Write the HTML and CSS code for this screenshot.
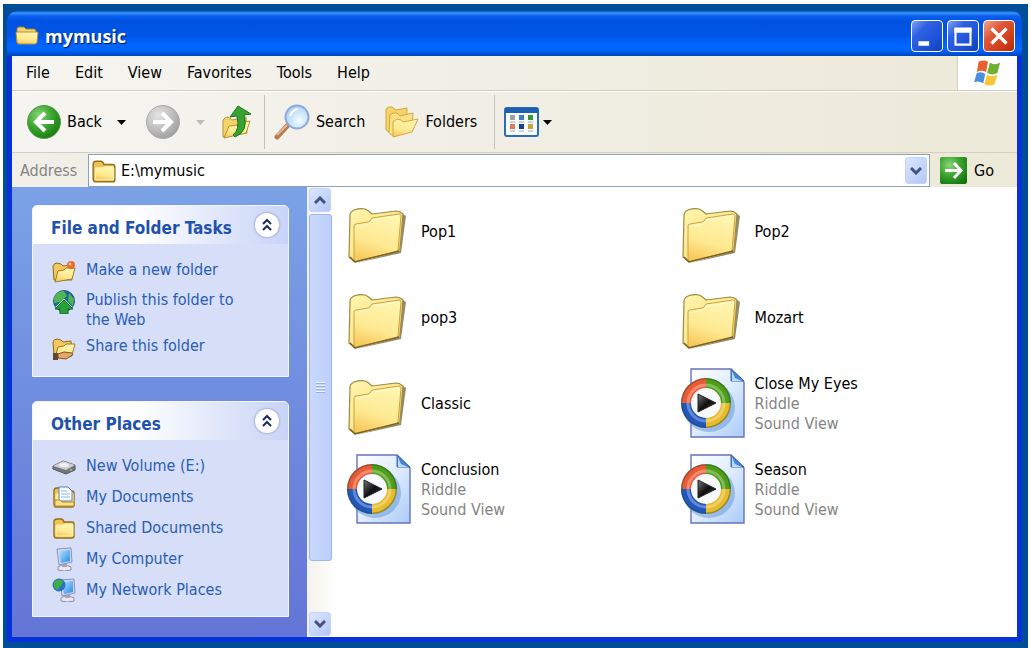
FILE: index.html
```
<!DOCTYPE html>
<html lang="en">
<head>
    <meta charset="UTF-8">
    <meta name="viewport" content="width=device-width, initial-scale=1.0">
    <title>mymusic</title>
    <link rel="stylesheet" href="styles.css">
</head>
<body>
    <!-- Shared icons -->
    <svg class="sprite" aria-hidden="true">
        <defs>
            <linearGradient id="gFolder" x1="0" y1="0" x2="1" y2="1">
                <stop offset="0" stop-color="#fff6b0"/><stop offset=".55" stop-color="#fde588"/><stop offset="1" stop-color="#f3bf4c"/>
            </linearGradient>
            <linearGradient id="gFront" x1="0.6" y1="0" x2="0.3" y2="1">
                <stop offset="0" stop-color="#fff5ae"/><stop offset=".6" stop-color="#fee992"/><stop offset="1" stop-color="#f8c95c"/>
            </linearGradient>
            <linearGradient id="gPage" x1="0" y1="0" x2="1" y2="1">
                <stop offset="0" stop-color="#ffffff"/><stop offset=".5" stop-color="#dfecfd"/><stop offset="1" stop-color="#a9cbf8"/>
            </linearGradient>
            <linearGradient id="gArrow" x1="0" y1="0" x2="1" y2="1">
                <stop offset="0" stop-color="#777"/><stop offset=".5" stop-color="#111"/><stop offset="1" stop-color="#333"/>
            </linearGradient>
            <linearGradient id="gScreen" x1="0" y1="0" x2="1" y2="1">
                <stop offset="0" stop-color="#b5e6ff"/><stop offset="1" stop-color="#2389e6"/>
            </linearGradient>
            <radialGradient id="gGreen" cx=".35" cy=".3" r=".8">
                <stop offset="0" stop-color="#8bd47c"/><stop offset=".5" stop-color="#3aa52d"/><stop offset="1" stop-color="#14750f"/>
            </radialGradient>
            <radialGradient id="gGray" cx=".35" cy=".3" r=".8">
                <stop offset="0" stop-color="#e4e4e2"/><stop offset=".6" stop-color="#bababa"/><stop offset="1" stop-color="#999"/>
            </radialGradient>
            <radialGradient id="gLens" cx=".6" cy=".65" r=".7">
                <stop offset="0" stop-color="#f4fcff"/><stop offset="1" stop-color="#a5d0f6"/>
            </radialGradient>
        </defs>
        <symbol id="folder" viewBox="0 0 68 72">
            <path d="M12 67 L57 57 L62 20 L59 18 L56 55 Z" fill="#6e663f" opacity=".75"/>
            <path d="M6 19 Q6 16 10 14 Q16 12 21 13 Q24 14 28 18 L52 15 Q56 15 59 18 L56 54 L11 66 L5 61 Z" fill="url(#gFolder)" stroke="#9a8a44" stroke-width="1.2" stroke-linejoin="round"/>
            <path d="M10 30 Q10 28 12 28 L24 26 Q26 26 28 22 L55 18 Q57 18 57 20 L54 54 Q54 56 52 56 L12 65 Q10 65 10 63 Z" fill="url(#gFront)" stroke="#c9a345" stroke-linejoin="round"/>
            <path d="M12 31 L25 28 L29 24 L55 20" fill="none" stroke="#fffbd6"/>
            <path d="M6 61 L11 66 L55 55" fill="none" stroke="#7a6420" stroke-width="1.5"/>
        </symbol>
        <symbol id="song" viewBox="0 0 68 72">
            <path d="M13 1 H53 L66 14 V69 H13 Z" fill="url(#gPage)" stroke="#6673b8" stroke-width="1.4"/>
            <path d="M53 1 V13 H66 Z" fill="#3f86dc" stroke="#4a62a8"/>
            <path d="M54 3 L57 10 L64 13 H54 Z" fill="#b7dafd"/>
            <ellipse cx="31" cy="39" rx="26" ry="25" fill="#548fd6" opacity=".45"/>
            <path d="M28 35 V10 A25 25 0 0 0 3 35 Z" fill="#ec5a35"/>
            <path d="M28 35 H53 A25 25 0 0 0 28 10 Z" fill="#4f9e18"/>
            <path d="M28 35 V60 A25 25 0 0 0 53 35 Z" fill="#e8bb2b"/>
            <path d="M28 35 H3 A25 25 0 0 0 28 60 Z" fill="#2257be"/>
            <circle cx="28" cy="35" r="24.3" fill="none" stroke="#24452f" stroke-opacity=".4" stroke-width="1.6"/>
            <circle cx="28" cy="35" r="18" fill="none" stroke="#fff" stroke-opacity=".3" stroke-width="3"/>
            <circle cx="28" cy="35" r="15" fill="#f7f9fb"/>
            <path d="M20 26 L38 35 L20 44 Z" fill="url(#gArrow)" stroke="#222"/>
        </symbol>
        <symbol id="folder-small" viewBox="0 0 24 24">
            <path d="M2 19 V6 Q2 3 5 3 H9 Q11 3 12 6 H20 Q22 6 22 8 V20 Q22 22 20 22 H4 Q2 22 2 19 Z" fill="#f0c351" stroke="#94701c" stroke-width="1.4"/>
            <path d="M4 10 Q4 9 5 9 H11 L13 8 H20 Q21 8 21 9 V19 Q21 20 20 20 H5 Q4 20 4 19 Z" fill="url(#gFront)" stroke="#fff4b5"/>
        </symbol>
        <symbol id="folder-open" viewBox="0 0 24 24">
            <path d="M2 20 L1 6 Q2 3 5 3 L9 4 L11 6 L19 5 L20 20 Z" fill="#f3c95e" stroke="#8a6c22"/>
            <path d="M3 22 L6 11 L12 10 L14 8 L23 8 L20 19 Z" fill="url(#gFront)" stroke="#a27b25" stroke-linejoin="round"/>
        </symbol>
        <symbol id="folder-title" viewBox="0 0 24 24">
            <path d="M2 18 V5 Q2 3 4 3 H9 L11 5 H19 Q21 5 21 7 V18 Z" fill="#f3d373" stroke="#9c7a2a"/>
            <path d="M1 9 Q1 8 2 8 H22 Q23 8 23 9 L22 18 Q22 20 20 20 H4 Q2 20 2 18 Z" fill="url(#gFront)" stroke="#b48f35"/>
        </symbol>
        <symbol id="chevrons" viewBox="0 0 12 14">
            <path d="M2 6 L6 2 L10 6 M2 12 L6 8 L10 12" fill="none" stroke="#1b2c5c" stroke-width="2"/>
        </symbol>
        <symbol id="monitor" viewBox="0 0 24 24">
            <path d="M6 20 Q11 16 19 20 L19 23 Q12 25 6 23 Z" fill="#e9e8f2" stroke="#8f8da6"/>
            <path d="M10 15 L15 16 L15 20 L10 20 Z" fill="#a5a3bd"/>
            <path d="M5 2 L19 1 L20 15 L7 18 Z" fill="#cfd9ef" stroke="#8593bd"/>
            <path d="M7 4 L18 3 L18 14 L9 16 Z" fill="url(#gScreen)"/>
        </symbol>
    </svg>

    <div class="desktop">
        <main class="window">
            <header class="titlebar">
                <svg class="title-icon"><use href="#folder-title"/></svg>
                <h1>mymusic</h1>
                <button class="win-btn" aria-label="Minimize">
                    <svg viewBox="0 0 28 28"><path d="M6 19 H16 V23 H6 Z" fill="#fff"/></svg>
                </button>
                <button class="win-btn" aria-label="Maximize">
                    <svg viewBox="0 0 28 28"><path d="M7 8 H21 V22 H7 Z" fill="none" stroke="#fff" stroke-width="2"/><path d="M6 6 H22 V11 H6 Z" fill="#fff"/></svg>
                </button>
                <button class="win-btn close" aria-label="Close">
                    <svg viewBox="0 0 28 28"><path d="M7 7 L21 21 M21 7 L7 21" stroke="#fff" stroke-width="3"/></svg>
                </button>
            </header>

            <nav class="menubar">
                <a href="#">File</a>
                <a href="#">Edit</a>
                <a href="#">View</a>
                <a href="#">Favorites</a>
                <a href="#">Tools</a>
                <a href="#">Help</a>
                <div class="flag">
                    <svg viewBox="0 0 30 30">
                        <path d="M5 3 Q10 0 15 3 L13 14 Q8 11 3 14 Z" fill="#e9602f"/>
                        <path d="M17 4 Q22 7 28 4 L25 15 Q20 18 14 15 Z" fill="#70b035"/>
                        <path d="M3 15 Q8 13 12 16 L10 26 Q5 23 0 25 Z" fill="#4a8fde"/>
                        <path d="M14 17 Q19 20 25 17 L22 27 Q16 30 11 27 Z" fill="#f6c436"/>
                    </svg>
                </div>
            </nav>

            <div class="toolbar">
                <button class="tool">
                    <svg class="icon-nav" viewBox="0 0 34 34"><circle cx="17" cy="17" r="16.5" fill="url(#gGreen)" stroke="#5c9c50"/><path d="M18 8 L9 17 L18 26 M10 17 H27" fill="none" stroke="#fff" stroke-width="4"/></svg>
                    <span>Back</span>
                </button>
                <button class="tool arrow" aria-label="Back history"><svg viewBox="0 0 9 5"><path d="M0 0 H9 L4.5 5 Z"/></svg></button>
                <button class="tool" aria-label="Forward">
                    <svg class="icon-nav" viewBox="0 0 34 34"><circle cx="17" cy="17" r="16.5" fill="url(#gGray)" stroke="#aaa"/><path d="M16 8 L25 17 L16 26 M24 17 H7" fill="none" stroke="#fff" stroke-width="4"/></svg>
                </button>
                <button class="tool arrow off" aria-label="Forward history"><svg viewBox="0 0 9 5"><path d="M0 0 H9 L4.5 5 Z"/></svg></button>
                <button class="tool" aria-label="Up">
                    <svg class="icon-nav" viewBox="0 0 34 34">
                        <path d="M2 32 L2 15 Q4 12 7 12 L11 15 L25 12 L26 28 Z" fill="#f5d368" stroke="#b4913a"/>
                        <path d="M3 33 L8 21 L17 20 L19 18 L29 16 L25 28 Z" fill="url(#gFront)" stroke="#b4913a"/>
                        <path d="M12 30 Q19 25 16 11 L9 12 L17 1 L30 9 L23 10 Q28 26 14 32 Z" fill="#38a232" stroke="#1e7420"/>
                    </svg>
                </button>
                <span class="separator"></span>
                <button class="tool">
                    <svg class="icon-search" viewBox="0 0 36 36"><path d="M14 21 L3 33" stroke="#b67b50" stroke-width="5" stroke-linecap="round"/><path d="M13 21 L3 31" stroke="#e5b58f" stroke-width="2"/><circle cx="23" cy="13" r="11.5" fill="url(#gLens)" stroke="#91a9d9" stroke-width="2"/><path d="M16 12 Q18 6 24 5" fill="none" stroke="#fff" stroke-width="2"/></svg>
                    <span>Search</span>
                </button>
                <button class="tool folders">
                    <svg class="icon-nav" viewBox="0 0 34 34">
                        <path d="M1 25 L1 4 Q3 1 7 2 L11 5 L22 3 L22 20 L4 27 Z" fill="#f6d368" stroke="#d1a846"/>
                        <path d="M4 28 L5 10 Q8 7 12 8 L15 11 L28 8 L27 25 L8 31 Z" fill="#fbe183" stroke="#d1a846"/>
                        <path d="M8 32 L8 17 L12 14 L16 15 L18 17 L33 14 L27 27 Z" fill="url(#gFront)" stroke="#d1a846"/>
                    </svg>
                    <span>Folders</span>
                </button>
                <span class="separator"></span>
                <button class="tool views" aria-label="Views">
                    <svg class="icon-views" viewBox="0 0 35 30">
                        <rect x="1" y="1" width="33" height="28" rx="2" fill="#f8fbff" stroke="#2b6cb5" stroke-width="2"/>
                        <path d="M1 1 H34 V6 H1 Z" fill="#1c5eb0"/>
                        <rect x="6" y="8" width="5" height="5" fill="#a0a0a0"/><rect x="15" y="8" width="5" height="5" fill="#3f7fc0"/><rect x="24" y="8" width="5" height="5" fill="#369a33"/>
                        <rect x="6" y="17" width="5" height="5" fill="#e07a55"/><rect x="15" y="17" width="5" height="5" fill="#17408f"/><rect x="24" y="17" width="5" height="5" fill="#c2a83a"/>
                        <path d="M6 15 H11 M15 15 H20 M24 15 H29 M6 24 H11 M15 24 H20 M24 24 H29" stroke="#9daabd"/>
                    </svg>
                    <svg class="caret" viewBox="0 0 9 5"><path d="M0 0 H9 L4.5 5 Z"/></svg>
                </button>
            </div>

            <form class="addressbar">
                <label for="address">Address</label>
                <div class="combo">
                    <svg class="combo-icon"><use href="#folder-small"/></svg>
                    <input type="text" id="address" value="E:\mymusic">
                    <button type="button" class="combo-btn" aria-label="Show addresses"><svg viewBox="0 0 12 8"><path d="M1 1 L6 6 L11 1" fill="none" stroke="#42527e" stroke-width="3"/></svg></button>
                </div>
                <button type="button" class="go">
                    <svg viewBox="0 0 27 27"><rect width="27" height="27" rx="2" fill="url(#gGreen)"/><path d="M14 6 L21 13.5 L14 21 M20 13.5 H5" fill="none" stroke="#fff" stroke-width="3"/></svg>
                    <span>Go</span>
                </button>
            </form>

            <div class="content">
                <aside class="sidebar">
                    <section class="panel">
                        <div class="panel-head">
                            <h2>File and Folder Tasks</h2>
                            <button class="collapse" aria-label="Collapse"><svg><use href="#chevrons"/></svg></button>
                        </div>
                        <ul class="tasks">
                            <li><a href="#">
                                <svg viewBox="0 0 24 24"><use href="#folder-open"/><circle cx="19" cy="5" r="4" fill="#ee6a2c"/><circle cx="18" cy="4" r="1.5" fill="#ffc08b"/></svg>
                                Make a new folder</a></li>
                            <li><a href="#">
                                <svg viewBox="0 0 24 24"><circle cx="12" cy="11" r="10.5" fill="#1d6a8c" stroke="#32518c"/><path d="M2 7 Q6 0 12 1 L15 6 L8 12 L2 13 Z M17 3 L22 9 L21 16 L16 11 Z" fill="#4fb556"/><path d="M12 10 L21 19 H16 V24 H8 V19 H3 Z" fill="#27a23a" stroke="#146b25"/><path d="M4 17 L12 9 L20 17" fill="none" stroke="#b9e6b6"/></svg>
                                Publish this folder to the Web</a></li>
                            <li><a href="#">
                                <svg viewBox="0 0 24 24"><use href="#folder-open"/><path d="M1 17 H6 V24 H1 Z" fill="#5d4634"/><path d="M6 18 L12 16 L20 17 Q22 19 19 20 L14 23 L6 22 Z" fill="#e3a865" stroke="#845220"/></svg>
                                Share this folder</a></li>
                        </ul>
                    </section>

                    <section class="panel">
                        <div class="panel-head">
                            <h2>Other Places</h2>
                            <button class="collapse" aria-label="Collapse"><svg><use href="#chevrons"/></svg></button>
                        </div>
                        <ul class="places">
                            <li><a href="#">
                                <svg viewBox="0 0 24 24"><path d="M1 12 L11 7 L23 11 V16 L14 20 L1 15 Z" fill="#77777b" stroke="#56565c"/><path d="M1 12 L11 7 L23 11 L14 16 Z" fill="#cfcfd3"/><ellipse cx="12" cy="11" rx="5" ry="2" fill="#efeff2"/><circle cx="19" cy="16" r="1" fill="#7de07d"/></svg>
                                New Volume (E:)</a></li>
                            <li><a href="#">
                                <svg viewBox="0 0 24 24"><use href="#folder-small"/><path d="M7 2 H16 L20 6 V16 H7 Z" fill="#f8fbff" stroke="#5480bd"/><path d="M9 6 H15 M9 9 H18 M9 12 H18" stroke="#8eb3e4"/><path d="M3 15 H8 L10 17 H22 V21 H3 Z" fill="#fbdf82" stroke="#b48c32"/></svg>
                                My Documents</a></li>
                            <li><a href="#"><svg><use href="#folder-small"/></svg>Shared Documents</a></li>
                            <li><a href="#"><svg><use href="#monitor"/></svg>My Computer</a></li>
                            <li><a href="#">
                                <svg viewBox="0 0 24 24"><use href="#monitor" x="3"/><circle cx="7" cy="7" r="6.5" fill="#2b6fc8"/><path d="M2 4 Q6 0 11 3 L9 8 L5 12 L2 9 Z" fill="#3fae42"/></svg>
                                My Network Places</a></li>
                        </ul>
                    </section>
                </aside>

                <div class="scrollbar">
                    <button class="scroll-btn" aria-label="Scroll up"><svg viewBox="0 0 12 8"><path d="M1 7 L6 2 L11 7" fill="none" stroke="#42527e" stroke-width="3"/></svg></button>
                    <div class="thumb"><span class="grip"></span></div>
                    <button class="scroll-btn" aria-label="Scroll down"><svg viewBox="0 0 12 8"><path d="M1 1 L6 6 L11 1" fill="none" stroke="#42527e" stroke-width="3"/></svg></button>
                </div>

                <ul class="files">
                    <li><svg><use href="#folder"/></svg><p>Pop1</p></li>
                    <li><svg><use href="#folder"/></svg><p>Pop2</p></li>
                    <li><svg><use href="#folder"/></svg><p>pop3</p></li>
                    <li><svg><use href="#folder"/></svg><p>Mozart</p></li>
                    <li><svg><use href="#folder"/></svg><p>Classic</p></li>
                    <li><svg><use href="#song"/></svg><p>Close My Eyes<small>Riddle</small><small>Sound View</small></p></li>
                    <li><svg><use href="#song"/></svg><p>Conclusion<small>Riddle</small><small>Sound View</small></p></li>
                    <li><svg><use href="#song"/></svg><p>Season<small>Riddle</small><small>Sound View</small></p></li>
                </ul>
            </div>
        </main>
    </div>
</body>
</html>
```
FILE: styles.css
```
* {
    box-sizing: border-box;
}
body {
    margin: 0;
    padding: 4px 3px 0;
    min-height: 100vh;
    display: flex;
    background-color: #fff;
    color: #000;
    font-family: "DejaVu Sans Condensed", Tahoma, "DejaVu Sans", sans-serif;
    font-size: 16px;
    line-height: 20px;
}
h1, h2, p, ul {
    margin: 0;
    padding: 0;
}
ul {
    list-style: none;
}
button, input {
    font: inherit;
    color: inherit;
    border: none;
    background: none;
    padding: 0;
}
a {
    color: inherit;
    text-decoration: none;
}
svg {
    display: block;
    flex: none;
}
.sprite {
    position: absolute;
    width: 0;
    height: 0;
}
.desktop {
    flex: 1;
    display: flex;
    padding: 7px 6px 6px 4px;
    background-color: #004e98;
}
.window {
    flex: 1;
    min-width: 0;
    display: flex;
    flex-direction: column;
    padding: 0 5px 5px;
    background: #0831d9;
    border-radius: 10px 10px 0 0;
    overflow: hidden;
}

/* Title bar */
.titlebar {
    display: flex;
    align-items: center;
    gap: 4px;
    height: 45px;
    margin: 0 -5px;
    padding: 4px 7px 0 8px;
    background: linear-gradient(#0a55cc 0, #3a94ff 2px, #0a5ff0 5px, #0053e1 10px, #0055e8 24px, #0066ff 34px, #0066ff 39px, #0049c4 44px);
}
.title-icon {
    width: 24px;
    height: 24px;
}
.titlebar h1 {
    flex: 1;
    padding-left: 2px;
    color: #fff;
    font-family: "Open Sans", sans-serif;
    font-size: 18px;
    font-weight: 700;
    line-height: 24px;
    text-shadow: 1px 1px 1px #00175c;
}
.win-btn {
    width: 32px;
    height: 32px;
    border: 1px solid #fff;
    border-radius: 4px;
    background: linear-gradient(135deg, #7fa2f0 0, #2f62e2 30%, #1c50d8 70%, #1340b8);
}
.win-btn.close {
    background: linear-gradient(135deg, #f0a48c 0, #e0583a 35%, #cf3a16 75%, #a92c10);
}

/* Menu, toolbar and address bar */
.menubar {
    display: flex;
    align-items: center;
    gap: 25px;
    height: 35px;
    padding-left: 14px;
    background: linear-gradient(90deg, #f5f4f0, #ece9d8);
    border-bottom: 1px solid #cfccbd;
}
.flag {
    display: flex;
    align-items: center;
    justify-content: center;
    align-self: stretch;
    width: 60px;
    margin-left: auto;
    background-color: #fff;
    border-left: 1px solid #d6d2c2;
}
.flag svg {
    width: 28px;
    height: 28px;
}
.toolbar {
    display: flex;
    align-items: center;
    height: 62px;
    padding-left: 15px;
    background: linear-gradient(90deg, #f5f4f0, #ece9d8);
    border-top: 1px solid #fff;
    border-bottom: 1px solid #d3d0c0;
}
.tool {
    display: flex;
    align-items: center;
    gap: 6px;
}
.arrow {
    padding: 0 20px 0 15px;
}
.arrow svg, .caret {
    width: 9px;
    height: 5px;
}
.arrow.off {
    padding: 0 16px;
    fill: #bdbdb8;
}
.icon-nav {
    width: 34px;
    height: 34px;
}
.icon-search {
    width: 36px;
    height: 36px;
}
.icon-views {
    width: 35px;
    height: 30px;
}
.separator {
    width: 1px;
    height: 54px;
    margin: 0 9px;
    background-color: #c5c2b5;
}
.folders {
    margin: 0 8px 0 20px;
}
.views {
    gap: 4px;
}
.addressbar {
    display: flex;
    align-items: center;
    height: 34px;
    padding: 1px 23px 0 8px;
    background: linear-gradient(90deg, #f0efe9, #ece9d8);
}
.addressbar label {
    width: 68px;
    color: #85857f;
}
.combo {
    flex: 1;
    display: flex;
    align-items: center;
    height: 33px;
    padding: 0 2px;
    background-color: #fff;
    border: 1px solid #8f9fb5;
}
.combo-icon {
    width: 26px;
    height: 26px;
}
.combo-icon use {
    width: 26px;
    height: 26px;
}
.combo input {
    flex: 1;
    min-width: 0;
    padding: 0 4px;
    outline: none;
}
.combo-btn, .scroll-btn {
    display: flex;
    align-items: center;
    justify-content: center;
    width: 22px;
    height: 27px;
    background: linear-gradient(135deg, #dbe6ff, #b3c8f7);
    border: 1px solid #c3d3fa;
    border-radius: 3px;
}
.combo-btn svg, .scroll-btn svg {
    width: 12px;
    height: 8px;
}
.go {
    display: flex;
    align-items: center;
    gap: 7px;
    margin-left: 10px;
}
.go svg {
    width: 27px;
    height: 27px;
}

/* Content */
.content {
    flex: 1;
    display: flex;
    background-color: #fff;
}
.sidebar {
    width: 295px;
    padding: 18px 18px 19px 20px;
    background: linear-gradient(#7ba2e7, #6375d6);
}
.panel {
    background-color: #d6dff7;
    border: 1px solid #f2f5fe;
    border-radius: 5px 5px 0 0;
    overflow: hidden;
}
.panel + .panel {
    margin-top: 24px;
}
.panel-head {
    display: flex;
    align-items: center;
    justify-content: space-between;
    height: 38px;
    padding: 0 9px 0 18px;
    background: linear-gradient(90deg, #fff 40%, #c8d4f7);
}
.panel-head h2 {
    padding-top: 5px;
    color: #1f52ac;
    font-size: 17px;
    font-weight: 700;
}
.collapse {
    display: flex;
    align-items: center;
    justify-content: center;
    width: 24px;
    height: 24px;
    background-color: #fff;
    border-radius: 50%;
    box-shadow: 0 0 2px 1px #a9b2d6;
}
.collapse svg {
    width: 12px;
    height: 14px;
}
.tasks, .places {
    color: #2a5db4;
}
.tasks a, .places a {
    display: flex;
    gap: 10px;
}
.tasks svg, .places svg {
    width: 24px;
    height: 24px;
}
.tasks {
    display: grid;
    gap: 6px;
    padding: 16px 36px 16px 19px;
}
.tasks a {
    min-height: 24px;
}
.places {
    display: grid;
    gap: 7px;
    padding: 14px 19px;
}
.places a {
    align-items: center;
}
.scrollbar {
    display: flex;
    flex-direction: column;
    align-items: center;
    width: 26px;
    padding: 1px;
    background: linear-gradient(90deg, #f3f1ec, #fefefb);
}
.scroll-btn {
    height: 24px;
}
.thumb {
    flex: 1;
    display: flex;
    align-items: center;
    justify-content: center;
    width: 23px;
    margin: 2px 0 51px;
    background: linear-gradient(90deg, #c9d8fc, #bccffb);
    border: 1px solid #9fb5ea;
    border-radius: 3px;
}
.grip {
    width: 9px;
    height: 11px;
    background: repeating-linear-gradient(#eef4fe 0, #eef4fe 1px, #8cb0f8 1px, #8cb0f8 2px, transparent 2px, transparent 3px);
}
.files {
    flex: 1;
    display: grid;
    grid-template-columns: 1fr 1fr;
    grid-auto-rows: 72px;
    align-content: start;
    gap: 14px 0;
    padding: 9px 6px 8px 11px;
}
.files li {
    display: flex;
    align-items: center;
    gap: 9px;
}
.files svg {
    width: 68px;
    height: 72px;
}
.files small {
    display: block;
    color: #848484;
    font-size: 16px;
}
```
